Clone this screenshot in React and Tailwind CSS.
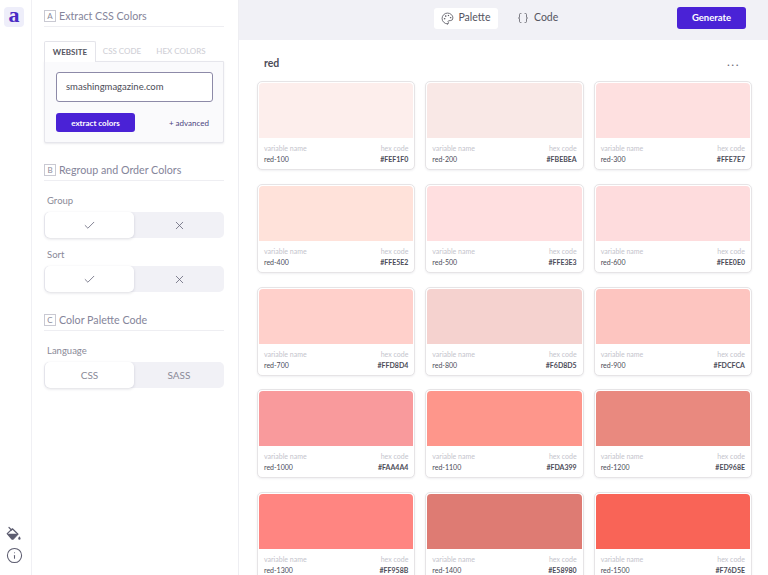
import React from 'react';
import { Check, X, Palette, Braces, Info } from 'lucide-react';

const colors = [
  ['red-100', '#FEF1F0', '#fdeeec'],
  ['red-200', '#FBEBEA', '#f9e8e6'],
  ['red-300', '#FFE7E7', '#fee0e0'],
  ['red-400', '#FFE5E2', '#ffe2da'],
  ['red-500', '#FFE3E3', '#ffdfe0'],
  ['red-600', '#FEE0E0', '#fedcdd'],
  ['red-700', '#FFD8D4', '#ffd0cb'],
  ['red-800', '#F6D8D5', '#f5d2cf'],
  ['red-900', '#FDCFCA', '#fdc5c0'],
  ['red-1000', '#FAA4A4', '#f99a9c'],
  ['red-1100', '#FDA399', '#fe968b'],
  ['red-1200', '#ED968E', '#e9897f'],
  ['red-1300', '#FF958B', '#ff8581'],
  ['red-1400', '#E58980', '#de7b73'],
  ['red-1500', '#F76D5E', '#f96457'],
];

function BucketIcon() {
  return (
    <svg width="16" height="16" viewBox="0 0 16 16" fill="none">
      <path d="M3 1.5l2.6 2.6" stroke="#5d5d70" strokeWidth="1.2" strokeLinecap="round" />
      <path d="M1.2 7.6L6.4 2.8l5.6 5.4-4.6 4.6a1.2 1.2 0 0 1-1.7 0z" stroke="#5d5d70" strokeWidth="1.2" strokeLinejoin="round" />
      <path d="M1.4 7.8h10.4l-4.4 5a1.2 1.2 0 0 1-1.7 0z" fill="#5d5d70" />
      <path d="M13.4 10.2c.7 1 1.2 1.6 1.2 2.3a1.2 1.2 0 0 1-2.4 0c0-.7.5-1.3 1.2-2.3z" fill="#5d5d70" />
    </svg>
  );
}

function SectionTitle({ letter, title }) {
  return (
    <div className="flex items-center h-[21px] border-b border-[#eeeef2]">
      <span className="w-[12px] h-[12px] border border-[#c9c9d2] text-[8px] leading-[10px] text-center text-[#8b8b9a]">{letter}</span>
      <span className="ml-[3px] text-[10.7px] text-[#85859a]">{title}</span>
    </div>
  );
}

function Toggle({ left, right }) {
  return (
    <div className="flex h-[26px] bg-[#f1f1f6] rounded-[5px] text-[10px] text-[#8a8a98]">
      <div className="w-[89px] ml-px bg-white rounded-[5px] shadow-[0_1px_3px_rgba(60,60,90,0.18)] flex items-center justify-center">{left}</div>
      <div className="flex-1 flex items-center justify-center">{right}</div>
    </div>
  );
}

function ColorCard({ name, hex, swatch }) {
  return (
    <div className="h-[89px] bg-white rounded-[5px] border border-[#e6e4e6] shadow-[0_1px_2px_rgba(60,60,90,0.08)] p-px">
      <div className="h-[55px] rounded-t-[4px]" style={{ backgroundColor: swatch }}></div>
      <div className="flex justify-between px-[5px] pt-[5px] text-[7px] leading-[11px]">
        <div>
          <div className="text-[#c4c4cc]">variable name</div>
          <div className="text-[#4c4c58]">{name}</div>
        </div>
        <div className="text-right">
          <div className="text-[#c4c4cc]">hex code</div>
          <div className="text-[#4c4c58] font-bold">{hex}</div>
        </div>
      </div>
    </div>
  );
}

export default function App() {
  return (
    <div className="h-[575px] w-[768px] overflow-hidden flex bg-white font-['Lato',sans-serif]">
      {/* icon rail */}
      <div className="w-[32px] shrink-0 border-r border-[#f0f0f4] flex flex-col items-center pt-[7px] pb-[11px] pr-[3px]">
        <div className="w-[20px] h-[20px] bg-[#eeeefa] rounded-[4px] flex items-center justify-center font-['Liberation_Serif',serif] font-bold text-[22px] leading-none text-[#4a2bc4] pb-[4px]">a</div>
        <div className="mt-auto flex flex-col items-center gap-[5px] text-[#5d5d70]">
          <BucketIcon />
          <Info size={17} strokeWidth={1.5} />
        </div>
      </div>

      {/* sidebar */}
      <div className="w-[207px] shrink-0 border-r border-[#eeeef2] pl-[12px] pr-[14px] pt-[6px]">
        <SectionTitle letter="A" title="Extract CSS Colors" />

        <div className="mt-[13px] flex h-[21px] text-[8px] font-medium">
          <div className="w-[52px] relative top-px z-10 h-[21px] bg-white border border-b-0 border-[#e4e4ea] rounded-t-[2px] flex items-center justify-center font-bold text-[#55555f]">WEBSITE</div>
          <div className="w-[52px] flex items-center justify-center text-[#cfcfd6]">CSS CODE</div>
          <div className="w-[64px] pl-[2px] flex items-center justify-center text-[#cfcfd6]">HEX COLORS</div>
        </div>
        <div className="h-[82px] border border-[#e6e6ec] rounded-b-[2px] bg-[#fafafc] shadow-[0_1px_2px_rgba(60,60,90,0.1)] px-[11px] pt-[10px]">
          <div className="h-[30px] w-[157px] bg-white border border-[#8d8aa8] rounded-[3px] flex items-center pl-[9px] text-[9.5px] text-[#4c4c58]">smashingmagazine.com</div>
          <div className="mt-[11px] flex items-center justify-between pr-[3px]">
            <button className="w-[79px] h-[19px] bg-[#4a22d6] rounded-[3px] text-white text-[8px] font-bold">extract colors</button>
            <span className="text-[8px] text-[#4c4480]">+ advanced</span>
          </div>
        </div>

        <div className="mt-[17px]"><SectionTitle letter="B" title="Regroup and Order Colors" /></div>
        <div className="mt-[14px] ml-[3px] text-[9.5px] leading-[12px] text-[#8a8a98]">Group</div>
        <div className="mt-[5px]"><Toggle left={<Check size={13} strokeWidth={1.5} className="text-[#66667a]" />} right={<X size={13} strokeWidth={1.5} className="text-[#66667a]" />} /></div>
        <div className="mt-[11px] ml-[3px] text-[9.5px] leading-[12px] text-[#8a8a98]">Sort</div>
        <div className="mt-[5px]"><Toggle left={<Check size={13} strokeWidth={1.5} className="text-[#66667a]" />} right={<X size={13} strokeWidth={1.5} className="text-[#66667a]" />} /></div>

        <div className="mt-[18px]"><SectionTitle letter="C" title="Color Palette Code" /></div>
        <div className="mt-[14px] ml-[3px] text-[9.5px] leading-[12px] text-[#8a8a98]">Language</div>
        <div className="mt-[5px]"><Toggle left="CSS" right="SASS" /></div>
      </div>

      {/* main */}
      <div className="flex-1 min-w-0">
        <div className="h-[40px] bg-[#f1f1f6] flex items-center pl-[195px] pr-[22px] pb-[4px]">
          <div className="h-[21px] w-[64px] bg-white rounded-[3px] flex items-center justify-center gap-[4px] text-[10.5px] text-[#55555f]">
            <Palette size={13} strokeWidth={1.5} />
            <span>Palette</span>
          </div>
          <div className="ml-[19px] flex items-center gap-[5px] text-[10.5px] text-[#55555f]">
            <Braces size={12} strokeWidth={1.5} />
            <span>Code</span>
          </div>
          <button className="ml-auto w-[69px] h-[22px] bg-[#4a22d6] rounded-[3px] text-white text-[9.5px] font-bold">Generate</button>
        </div>

        <div className="pl-[18px] pr-[16px]">
          <div className="h-[40px] pt-[8px] flex items-center justify-between pr-[12px]">
            <span className="pl-[7px] text-[10.5px] font-bold text-[#4c4c58]">red</span>
            <span className="text-[#6a6a76] text-[12px] leading-none tracking-[1.5px] pb-[4px]">...</span>
          </div>
          <div className="pt-px grid grid-cols-3 gap-x-[10px] gap-y-[13.75px]">
            {colors.map((c) => (
              <ColorCard key={c[0]} name={c[0]} hex={c[1]} swatch={c[2]} />
            ))}
          </div>
        </div>
      </div>
    </div>
  );
}
